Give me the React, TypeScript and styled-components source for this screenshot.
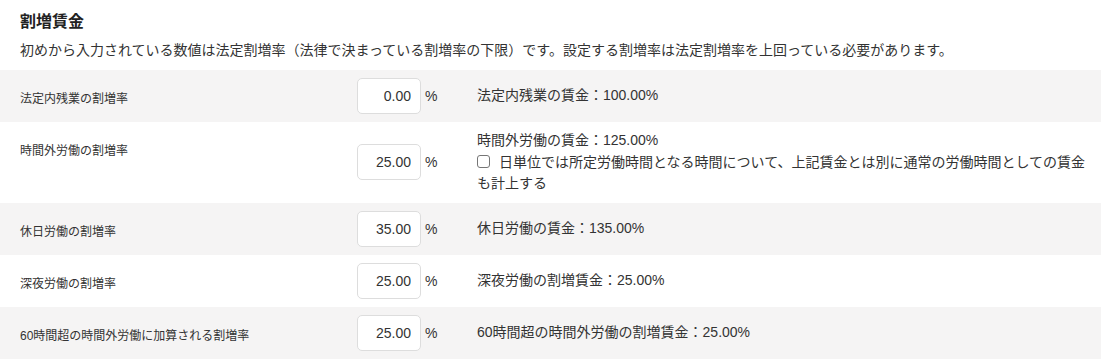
import React from "react";
import styled, { createGlobalStyle } from "styled-components";

const GlobalStyle = createGlobalStyle`
  body {
    margin: 0;
    background: #fff;
    color: #333;
    font-family: "Liberation Sans", "Noto Sans CJK JP", sans-serif;
  }
`;

const Section = styled.section`
  width: 1101px;
  padding-top: 10px;
`;

const Title = styled.h2`
  margin: 0 0 6px 20px;
  font-size: 16px;
  line-height: 24px;
  font-weight: bold;
  color: #222;
`;

const Description = styled.p`
  margin: 0 0 10px 20px;
  font-size: 14px;
  line-height: 20px;
  color: #333;
`;

const Row = styled.div<{ $shaded?: boolean }>`
  display: grid;
  grid-template-columns: 337px 64px 56px 1fr;
  align-items: center;
  padding: 8px 10px 8px 20px;
  min-height: 36px;
  background: ${props => (props.$shaded ? "#f5f4f4" : "#fff")};
`;

const Label = styled.div`
  align-self: start;
  padding-top: 13px;
  font-size: 12px;
  line-height: 17px;
  color: #333;
`;

const RateInput = styled.input`
  box-sizing: border-box;
  width: 64px;
  height: 36px;
  padding: 0 9px 0 6px;
  border: 1px solid #ddd;
  border-radius: 5px;
  background: #fff;
  text-align: right;
  font-family: inherit;
  font-size: 14px;
  color: #333;
  outline: none;
`;

const Unit = styled.span`
  padding-left: 4px;
  font-size: 14px;
`;

const Result = styled.div`
  font-size: 14px;
  line-height: 21.5px;
  color: #333;
`;

const CheckLine = styled.label`
  display: inline;
`;

const Check = styled.input`
  appearance: none;
  box-sizing: border-box;
  width: 13px;
  height: 13px;
  margin: 0 9px 0 0;
  border: 1px solid #767676;
  border-radius: 3px;
  background: #fff;
  vertical-align: -1px;
`;

type RateRowProps = {
  label: string;
  value: string;
  result: string;
  shaded?: boolean;
  children?: React.ReactNode;
};

const RateRow: React.FC<RateRowProps> = ({ label, value, result, shaded, children }) => (
  <Row $shaded={shaded}>
    <Label>{label}</Label>
    <RateInput defaultValue={value} />
    <Unit>%</Unit>
    <Result>
      <div>{result}</div>
      {children}
    </Result>
  </Row>
);

const App: React.FC = () => (
  <Section>
    <GlobalStyle />
    <Title>割増賃金</Title>
    <Description>
      初めから入力されている数値は法定割増率（法律で決まっている割増率の下限）です。設定する割増率は法定割増率を上回っている必要があります。
    </Description>

    <RateRow shaded label="法定内残業の割増率" value="0.00" result="法定内残業の賃金：100.00%" />

    <RateRow label="時間外労働の割増率" value="25.00" result="時間外労働の賃金：125.00%">
      <CheckLine>
        <Check type="checkbox" />
        日単位では所定労働時間となる時間について、上記賃金とは別に通常の労働時間としての賃金も計上する
      </CheckLine>
    </RateRow>

    <RateRow shaded label="休日労働の割増率" value="35.00" result="休日労働の賃金：135.00%" />

    <RateRow label="深夜労働の割増率" value="25.00" result="深夜労働の割増賃金：25.00%" />

    <RateRow
      shaded
      label="60時間超の時間外労働に加算される割増率"
      value="25.00"
      result="60時間超の時間外労働の割増賃金：25.00%"
    />
  </Section>
);

export default App;
